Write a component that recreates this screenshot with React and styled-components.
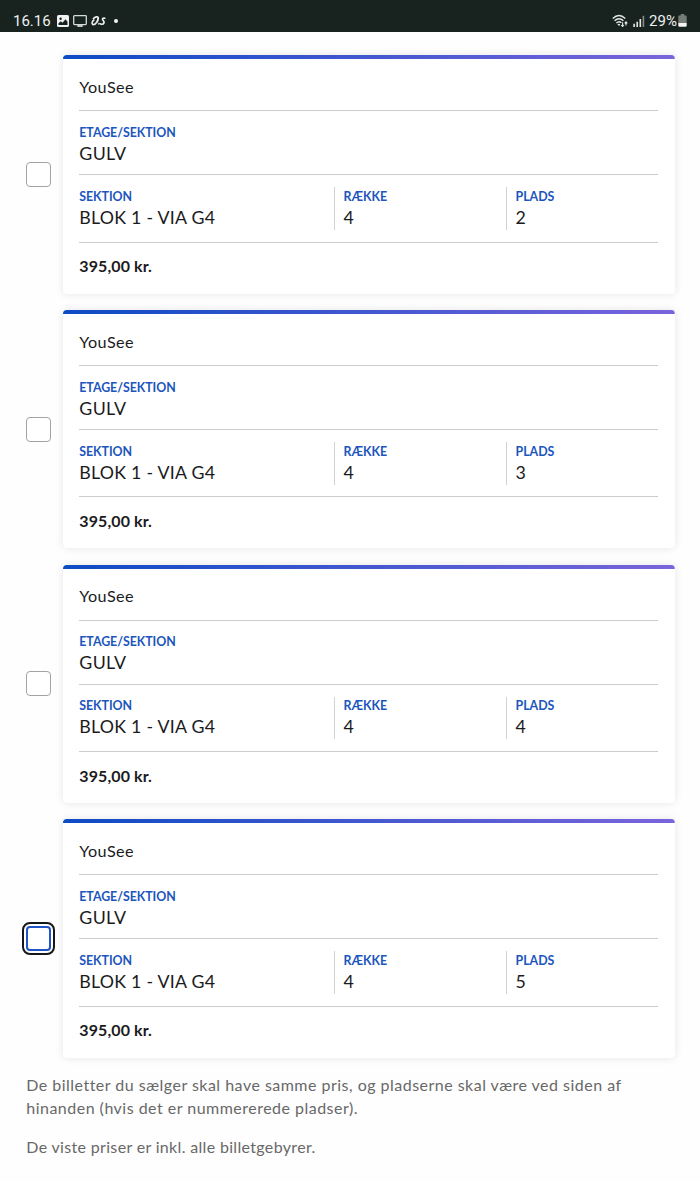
import React from "react";
import styled, { createGlobalStyle } from "styled-components";

const tickets = [
  { id: 1, seat: "2" },
  { id: 2, seat: "3" },
  { id: 3, seat: "4" },
  { id: 4, seat: "5", focused: true },
];

const StatusBar = () => (
  <Bar>
    <BarGroup>
      <Clock>16.16</Clock>
      <svg width="12" height="12" viewBox="0 0 12 12">
        <rect width="12" height="12" rx="1.6" fill="#f1f3f2" />
        <circle cx="3.6" cy="3.7" r="1.2" fill="#18231f" />
        <path d="M1.5 10V8.2l2.3-2 1.7 1.6 3-3.5 2 2.4V10z" fill="#18231f" />
      </svg>
      <svg width="14" height="12" viewBox="0 0 14 12">
        <rect x="0.7" y="0.7" width="12.6" height="8.9" rx="0.8" fill="none" stroke="#d5d9d7" strokeWidth="1.3" />
        <path d="M4.3 11h5.4" stroke="#d5d9d7" strokeWidth="1.8" />
      </svg>
      <svg width="15" height="12" viewBox="0 0 15 12" fill="none" stroke="#eef0ef" strokeLinecap="round" strokeLinejoin="round">
        <path d="M2.4 3.6C4 1.8 7 1 7.2 2.8 7.4 5 5 9.6 2.5 9.6.5 9.6.7 6.2 2.8 5.2" strokeWidth="1.6" />
        <path d="M7.2 2.8 6.4 6.6" strokeWidth="1.5" />
        <circle cx="7.8" cy="8.8" r="0.5" strokeWidth="0.9" />
        <path d="M13.8 3.2c-1.6-.5-2.9.6-2 1.8.9 1.1 1.9 1.700 1 3.200-.8 1.300-2.300 1.300-3.200.6" strokeWidth="1.7" />
      </svg>
      <Dot />
    </BarGroup>
    <BarGroup $right>
      <svg width="17" height="14" viewBox="0 0 17 14" fill="none" stroke="#e4e8e6">
        <path d="M.8 4.5Q7 -1.6 13.2 4.5" strokeWidth="1.4" />
        <path d="M2.6 6.8Q7 2.5 11.4 6.8" strokeWidth="1.4" />
        <path d="M4.4 9Q7 6.6 9.3 8.7" strokeWidth="1.4" />
        <path d="M5.4 10.2 7 12l1.3-1.6Q7 9.2 5.4 10.2Z" fill="#e4e8e6" stroke="none" />
        <path d="M10.6 8.2v4.2M9.3 11l1.3 1.5 1.3-1.500M14 11.600V7.800M12.700 9.300l1.300-1.500 1.300 1.500" strokeWidth="1.1" />
      </svg>
      <svg width="12" height="12" viewBox="0 0 12 12">
        <path d="M1.1 8.8V12M4.2 6.8V12M7.3 4.1V12" stroke="#e4e8e6" strokeWidth="1.6" />
        <path d="M10.4 0.8V12" stroke="#858d89" strokeWidth="1.6" />
      </svg>
      <Battery>29%</Battery>
      <svg width="9" height="13" viewBox="0 0 9 13">
        <path d="M2.7 0h3.6v1.4h1.2c.8 0 1.2.5 1.2 1.2V9H.3V2.6c0-.7.4-1.2 1.2-1.2h1.2z" fill="#747c78" />
        <path d="M.3 9h8.4v2.6c0 .8-.4 1.2-1.2 1.2h-6c-.8 0-1.2-.4-1.2-1.2z" fill="#f4f6f5" />
      </svg>
    </BarGroup>
  </Bar>
);

const Ticket = ({ seat, focused }) => (
  <Row>
    <Checkbox type="checkbox" $focused={focused} aria-label={`Plads ${seat}`} />
    <Card>
      <Title>YouSee</Title>
      <Floor>
        <Label>ETAGE/SEKTION</Label>
        <Value $spacing="0.35px">GULV</Value>
      </Floor>
      <Seats>
        <Cell>
          <Label>SEKTION</Label>
          <Value>BLOK 1 - VIA G4</Value>
        </Cell>
        <Cell $divided>
          <Label>RÆKKE</Label>
          <Value>4</Value>
        </Cell>
        <Cell $divided>
          <Label>PLADS</Label>
          <Value>{seat}</Value>
        </Cell>
      </Seats>
      <Price>395,00 kr.</Price>
    </Card>
  </Row>
);

const App = () => {
  return (
    <>
      <GlobalStyle />
      <StatusBar />
      <List>
        {tickets.map((t) => (
          <Ticket key={t.id} seat={t.seat} focused={t.focused} />
        ))}
      </List>
      <Notes>
        <Note $spacing="0.48px">
          De billetter du sælger skal have samme pris, og pladserne skal være ved siden af
          <br />
          hinanden (hvis det er nummererede pladser).
        </Note>
        <Note $spacing="0.33px">De viste priser er inkl. alle billetgebyrer.</Note>
      </Notes>
    </>
  );
};

export default App;

const GlobalStyle = createGlobalStyle`
  * {
    box-sizing: border-box;
  }

  body {
    margin: 0;
    min-height: 1182px;
    background: #fefefe;
    color: #1b1b1d;
    font-family: Lato, "Liberation Sans", sans-serif;
    overflow: hidden;
  }
`;

const Bar = styled.header`
  display: flex;
  align-items: center;
  justify-content: space-between;
  height: 31.5px;
  padding: 10px 12.6px 0 13px;
  background: #18231f;
  color: #eef0ef;
  font-family: Roboto, sans-serif;
`;

const BarGroup = styled.div`
  display: flex;
  align-items: center;
  gap: ${(p) => (p.$right ? "3.5px" : "4.4px")};
`;

const Clock = styled.span`
  margin-right: 1.6px;
  font-size: 15px;
  line-height: 20px;
`;

const Battery = styled.span`
  margin: 0 -2px 0 1px;
  font-size: 15px;
  line-height: 20px;
`;

const Dot = styled.i`
  width: 4px;
  height: 4px;
  margin-left: 3.5px;
  border-radius: 50%;
  background: #f4f6f5;
`;

const List = styled.main`
  display: flex;
  flex-direction: column;
  gap: 16.4px;
  padding: 23.9px 25.5px 0 26px;
`;

const Row = styled.div`
  display: flex;
  align-items: center;
  gap: 12px;
`;

const Checkbox = styled.input`
  appearance: none;
  flex: none;
  width: 25px;
  height: 25px;
  margin: 0;
  border: ${(p) => (p.$focused ? "2px solid #1f55c4" : "1px solid #a3a3a3")};
  border-radius: 4px;
  background: #fff;
  outline: ${(p) => (p.$focused ? "2px solid #16171b" : "none")};
  outline-offset: 2px;
`;

const Card = styled.section`
  flex: 1;
  height: 238.3px;
  padding: 4.3px 16.5px 0 16.3px;
  border-radius: 4px;
  background: linear-gradient(90deg, #0d4bc4, #7a64dc) top / 100% 4.3px no-repeat, #fff;
  box-shadow: 0 0 8px rgba(0, 0, 0, 0.1);
`;

const Title = styled.div`
  height: 51.5px;
  padding-top: 15.4px;
  border-bottom: 1px solid #cccccc;
  font-size: 16.2px;
  line-height: 24px;
  letter-spacing: 0.4px;
`;

const Floor = styled.div`
  height: 64px;
  padding-top: 12.8px;
  border-bottom: 1px solid #cccccc;

  > :last-child {
    margin-top: -1px;
  }
`;

const Seats = styled.div`
  display: grid;
  grid-template-columns: 255px 172px 1fr;
  height: 67.5px;
  padding: 12px 0;
  border-bottom: 1px solid #cccccc;
`;

const Cell = styled.div`
  padding-top: 0.8px;
  padding-left: ${(p) => (p.$divided ? "8.3px" : "0")};
  border-left: ${(p) => (p.$divided ? "1px solid #d2d2d2" : "none")};

  > :last-child {
    margin-top: -0.9px;
  }
`;

const Label = styled.div`
  color: #1b55bd;
  font-size: 12.4px;
  font-weight: 700;
  line-height: 18px;
  letter-spacing: -0.05px;
`;

const Value = styled.div`
  font-size: 17.8px;
  line-height: 25px;
  letter-spacing: ${(p) => p.$spacing || "0.24px"};
`;

const Price = styled.div`
  padding-top: 11.6px;
  font-size: 16px;
  font-weight: 700;
  line-height: 24px;
  letter-spacing: 0.1px;
`;

const Notes = styled.footer`
  padding: 16.6px 26px 0 26.3px;
  color: #686868;
`;

const Note = styled.p`
  margin: 0 0 16.4px;
  font-size: 16px;
  line-height: 22.4px;
  letter-spacing: ${(p) => p.$spacing};
  white-space: nowrap;
`;
